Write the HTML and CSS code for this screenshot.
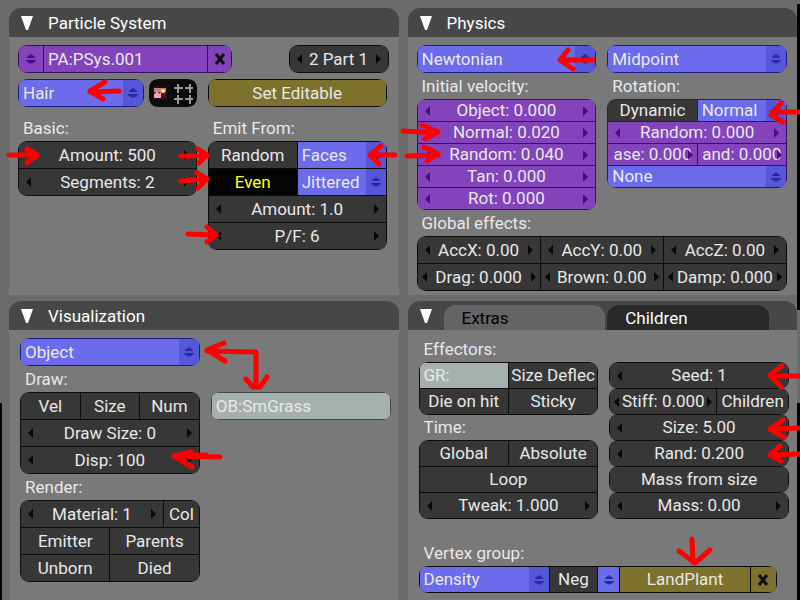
FILE: index.html
```html
<!DOCTYPE html>
<html lang="en">
    <head>
        <meta charset="utf-8" />
        <title>Particle System</title>
        <meta name="viewport" content="width=device-width, initial-scale=1.0" />
        <link rel="stylesheet" href="styles.css">
    </head>
    <body>
        <svg class="defs" aria-hidden="true">
            <symbol id="updown" viewBox="0 0 10 10"><path d="M5 0L9 3V4H1V3zM0 6H10V7L6 9.500H4L0 7z" /></symbol>
            <symbol id="cross" viewBox="0 0 12 14"><path d="M2 2L10 12M10 2L2 12" stroke="#111" stroke-width="3" fill="none" /></symbol>
            <symbol id="collapse" viewBox="0 0 12 14"><path d="M0 0H12L7 14H5z" fill="#fff" /></symbol>
        </svg>
        <div class="screen">
            <section class="panel">
                <header>
                    <button class="fold" aria-label="Collapse"><svg><use href="#collapse" /></svg></button>
                    <h2>Particle System</h2>
                </header>
                <div class="content particles">
                    <div class="bar">
                        <div class="group purple datablock">
                            <button aria-label="Browse"><svg class="updown"><use href="#updown" /></svg></button>
                            <input type="text" aria-label="Particle system name" value="PA:PSys.001">
                            <button aria-label="Delete"><svg class="cross"><use href="#cross" /></svg></button>
                        </div>
                        <div class="group part"><button class="num">2 Part 1</button></div>
                    </div>
                    <div class="columns">
                        <div>
                            <div class="bar type">
                                <div class="group blue hair">
                                    <span class="menu"><select aria-label="Type"><option>Hair</option></select><svg class="updown"><use href="#updown" /></svg></span>
                                </div>
                                <div class="group icons">
                                    <button aria-label="Material">
                                        <svg viewBox="0 0 23 26" width="23" height="26">
                                            <path d="M3 6H17V20H3z" fill="#1c1012" />
                                            <path d="M4 8H16V18H4z" fill="#6d2838" />
                                            <path d="M4 8H16V12H4z" fill="#d0787c" />
                                            <path d="M4 18V15L7 11L9 14L11 12V18z" fill="#e8a8b0" />
                                            <path d="M11 18V14L13 13L16 15V18z" fill="#441420" />
                                            <circle cx="13" cy="11" r="2" fill="#ffe868" />
                                        </svg>
                                    </button>
                                    <button aria-label="Vertices">
                                        <svg viewBox="0 0 23 26" width="23" height="26">
                                            <path d="M1 8H10M1 19H10M12 8H20M12 19H20M5 4V13M17 4V13M5 15V24M17 15V24" stroke="#989898" stroke-width="2" fill="none" />
                                        </svg>
                                    </button>
                                </div>
                            </div>
                            <p class="caption tall">Basic:</p>
                            <div class="group">
                                <button class="num">Amount: 500</button>
                                <button class="num">Segments: 2</button>
                            </div>
                        </div>
                        <div>
                            <div class="group gold"><button>Set Editable</button></div>
                            <p class="caption tall">Emit From:</p>
                            <div class="group half">
                                <button>Random</button>
                                <span class="menu blue"><select aria-label="Emit from"><option>Faces</option></select><svg class="updown"><use href="#updown" /></svg></span>
                                <button class="pressed">Even</button>
                                <span class="menu blue"><select aria-label="Distribution"><option>Jittered</option></select><svg class="updown"><use href="#updown" /></svg></span>
                                <button class="num wide">Amount: 1.0</button>
                                <button class="num wide">P/F: 6</button>
                            </div>
                        </div>
                    </div>
                </div>
            </section>

            <section class="panel">
                <header>
                    <button class="fold" aria-label="Collapse"><svg><use href="#collapse" /></svg></button>
                    <h2>Physics</h2>
                </header>
                <div class="content">
                    <div class="columns">
                        <div>
                            <div class="group blue">
                                <span class="menu"><select aria-label="Physics type"><option>Newtonian</option></select><svg class="updown"><use href="#updown" /></svg></span>
                            </div>
                            <p class="caption">Initial velocity:</p>
                            <div class="group purple short">
                                <button class="num">Object: 0.000</button>
                                <button class="num">Normal: 0.020</button>
                                <button class="num">Random: 0.040</button>
                                <button class="num">Tan: 0.000</button>
                                <button class="num">Rot: 0.000</button>
                            </div>
                        </div>
                        <div>
                            <div class="group blue">
                                <span class="menu"><select aria-label="Integrator"><option>Midpoint</option></select><svg class="updown"><use href="#updown" /></svg></span>
                            </div>
                            <p class="caption">Rotation:</p>
                            <div class="group purple short half">
                                <button class="dark">Dynamic</button>
                                <span class="menu blue"><select aria-label="Rotation"><option>Normal</option></select><svg class="updown"><use href="#updown" /></svg></span>
                                <button class="num wide">Random: 0.000</button>
                                <button class="num tight">ase: 0.000</button>
                                <button class="num tight">and: 0.000</button>
                                <span class="menu blue wide"><select aria-label="Angular velocity"><option>None</option></select><svg class="updown"><use href="#updown" /></svg></span>
                            </div>
                        </div>
                    </div>
                    <p class="caption">Global effects:</p>
                    <div class="group third">
                        <button class="num">AccX: 0.00</button>
                        <button class="num">AccY: 0.00</button>
                        <button class="num">AccZ: 0.00</button>
                        <button class="num tight">Drag: 0.000</button>
                        <button class="num tight">Brown: 0.00</button>
                        <button class="num tight">Damp: 0.000</button>
                    </div>
                </div>
            </section>

            <section class="panel lower">
                <header>
                    <button class="fold" aria-label="Collapse"><svg><use href="#collapse" /></svg></button>
                    <h2>Visualization</h2>
                </header>
                <div class="content">
                    <div class="columns">
                        <div>
                            <div class="group blue">
                                <span class="menu"><select aria-label="Visualization"><option>Object</option></select><svg class="updown"><use href="#updown" /></svg></span>
                            </div>
                            <p class="caption">Draw:</p>
                            <div class="group third">
                                <button>Vel</button>
                                <button>Size</button>
                                <button>Num</button>
                                <button class="num wide">Draw Size: 0</button>
                                <button class="num wide">Disp: 100</button>
                            </div>
                            <p class="caption">Render:</p>
                            <div class="group render">
                                <button class="num material">Material: 1</button>
                                <button class="col">Col</button>
                                <button class="side">Emitter</button>
                                <button class="side">Parents</button>
                                <button class="side">Unborn</button>
                                <button class="side">Died</button>
                            </div>
                        </div>
                        <div class="object">
                            <div class="group pale"><input type="text" aria-label="Object" value="OB:SmGrass"></div>
                        </div>
                    </div>
                </div>
            </section>

            <section class="panel lower">
                <header>
                    <button class="fold" aria-label="Collapse"><svg><use href="#collapse" /></svg></button>
                    <nav>
                        <button class="tab active">Extras</button>
                        <button class="tab">Children</button>
                    </nav>
                </header>
                <div class="content extras">
                    <div class="columns">
                        <div>
                            <p class="caption">Effectors:</p>
                            <div class="group medium half">
                                <input class="pale" type="text" aria-label="Group" value="GR:">
                                <button>Size Deflec</button>
                                <button>Die on hit</button>
                                <button>Sticky</button>
                            </div>
                            <p class="caption">Time:</p>
                            <div class="group medium half">
                                <button>Global</button>
                                <button>Absolute</button>
                                <button class="wide">Loop</button>
                                <button class="num wide">Tweak: 1.000</button>
                            </div>
                        </div>
                        <div class="stack">
                            <div class="group medium"><button class="num">Seed: 1</button></div>
                            <div class="group medium stiff">
                                <button class="num tight">Stiff: 0.000</button>
                                <button>Children</button>
                            </div>
                            <div class="group medium"><button class="num">Size: 5.00</button></div>
                            <div class="group medium"><button class="num">Rand: 0.200</button></div>
                            <div class="group medium"><button>Mass from size</button></div>
                            <div class="group medium"><button class="num">Mass: 0.00</button></div>
                        </div>
                    </div>
                    <p class="caption vertex-caption">Vertex group:</p>
                    <div class="group medium vertex">
                        <span class="menu blue"><select aria-label="Vertex group"><option>Density</option></select><svg class="updown"><use href="#updown" /></svg></span>
                        <button>Neg</button>
                        <button class="blue" aria-label="Browse groups"><svg class="updown"><use href="#updown" /></svg></button>
                        <button class="gold">LandPlant</button>
                        <button class="gold" aria-label="Clear group"><svg class="cross"><use href="#cross" /></svg></button>
                    </div>
                </div>
            </section>

            <!-- hand drawn pointers, laid over the panels -->
            <svg class="marks" viewBox="0 0 800 600" preserveAspectRatio="none" aria-hidden="true">
                <path d="M119 91L90 92M105 82L90 91L103 99" />
                <path d="M9 155L37 155M27 149L37 155L27 163" />
                <path d="M181 156L207 156M198 149L207 155L199 163" />
                <path d="M181 181L207 179M197 173L207 179L198 188" />
                <path d="M188 234L216 235M207 227L216 235L207 242" />
                <path d="M395 155L371 155M381 146L370 155L379 164" />
                <path d="M593 60L561 60M568 50L560 60L573 69" />
                <path d="M403 131L437 133M422 125L438 132L425 139" />
                <path d="M407 156L438 155M424 147L438 154L427 161" />
                <path d="M802 112L772 112M781 103L771 115L783 122" />
                <path d="M207 351L256 352V387M224 343L207 350L225 361M246 379L253 387H260L267 377" />
                <path d="M220 457L174 456M192 452L174 456L192 467M176 456L206 455" />
                <path d="M802 376L771 376M782 366L770 375L781 387" />
                <path d="M802 428L770 429M783 420L770 429L784 437" />
                <path d="M802 454L770 455M780 446L770 455L781 461" />
                <path d="M692 539L693 562M679 551L695 563L710 550" />
            </svg>
        </div>
    </body>
</html>
```

FILE: styles.css
```css
* {
    margin: 0;
    padding: 0;
    box-sizing: border-box;
}
body {
    background-color: #6b6b6b;
    color: #e8e8e8;
    font: 17px/24px Roboto, "Liberation Sans", sans-serif;
}
.defs {
    position: absolute;
    width: 0;
    height: 0;
}
.screen {
    position: relative;
    display: grid;
    grid-template-columns: 1fr 1fr;
    grid-template-rows: auto 1fr;
    column-gap: 9px;
    row-gap: 6px;
    min-height: 100vh;
    padding: 8px 3px 0 9px;
    overflow: hidden;
    background:
        linear-gradient(#000, #000) right 0 top 4px / 3px 306px no-repeat,
        linear-gradient(#000, #000) right 0 bottom 0 / 3px 197px no-repeat,
        linear-gradient(#000, #000) left 0 bottom 0 / 2px 197px no-repeat,
        #6b6b6b;
}
.panel {
    background-color: #797979;
    border-radius: 12px 12px 0 0;
}
.panel header {
    display: flex;
    align-items: center;
    height: 29px;
    padding-left: 12px;
    background-color: #474747;
    border-radius: 12px 12px 0 0;
    color: #fff;
}
h2 {
    padding-left: 15px;
    font-size: 17px;
    font-weight: normal;
}
.content {
    padding: 8px 10px 4px 9px;
}
.content.particles {
    padding-right: 12px;
}
.lower .content {
    padding: 8px 8px 4px 11px;
}
.columns {
    display: grid;
    grid-template-columns: 1fr 1fr;
    gap: 11px;
}
.bar {
    display: flex;
    justify-content: space-between;
    margin-bottom: 6px;
}
.bar.type {
    gap: 5px;
    margin-bottom: 0;
}
.caption {
    padding-left: 5px;
    line-height: 26px;
}
.caption.tall {
    padding-top: 8px;
}

/* controls */
button, input, select {
    width: 100%;
    min-width: 0;
    height: 26px;
    border: 0;
    outline: none;
    border-radius: 0;
    background-color: transparent;
    color: inherit;
    font: inherit;
    white-space: nowrap;
}
input, select {
    padding-left: 4px;
    appearance: none;
}
button svg {
    display: block;
    margin: auto;
}
.group {
    display: grid;
    gap: 1px;
    padding: 1px;
    border-radius: 9px;
    overflow: hidden;
    background-color: #0c0c0c;
}
.group > * {
    background-color: #373738;
}
.half {
    grid-template-columns: 1fr 1fr;
}
.third {
    grid-template-columns: 1fr 1fr 1fr;
}
.wide {
    grid-column: 1 / -1;
}
.short button, .short select {
    height: 21px;
    line-height: 21px;
}
.medium button, .medium input, .medium select {
    height: 25px;
    line-height: 25px;
}
.purple {
    background-color: #35106a;
}
.purple > * {
    background-color: #8343ba;
}
.group.blue {
    background-color: #1c1c88;
}
.blue > .menu, .menu.blue, button.blue {
    background-color: #6b6bec;
}
.gold > *, button.gold {
    background-color: #7e712c;
}
.pale > *, input.pale {
    background-color: #a6b1ad;
}
.group.pale {
    background-color: #3c4845;
}
button.dark {
    background-color: #373738;
}
button.pressed {
    background-color: #050505;
    color: #ffff20;
}
.menu {
    position: relative;
    display: block;
}
.menu select {
    display: block;
    background: linear-gradient(#5656d8, #5656d8) right / 20px 100% no-repeat;
}
.updown {
    width: 10px;
    height: 10px;
    fill: #2929a6;
}
.purple .updown {
    fill: #4a0a88;
}
.purple .menu .updown {
    fill: #2929a6;
}
.menu .updown {
    position: absolute;
    top: calc(50% - 5px);
    right: 5px;
    pointer-events: none;
}
.cross {
    width: 12px;
    height: 14px;
}
.num {
    position: relative;
}
.num::before, .num::after {
    content: "";
    position: absolute;
    top: calc(50% - 5px);
    border: 5px solid transparent;
}
.num::before {
    left: 7px;
    border-left-width: 0;
    border-right-color: #080808;
}
.num::after {
    right: 7px;
    border-right-width: 0;
    border-left-color: #080808;
}
.tight::before {
    left: 4px;
}
.tight::after {
    right: 4px;
}
.purple .num::before {
    border-right-color: #4a0a88;
}
.purple .num::after {
    border-left-color: #4a0a88;
}
.purple .tight::before {
    display: none;
}

/* particle system */
.datablock {
    grid-template-columns: 24px 1fr 23px;
    flex: 0 1 214px;
}
.part {
    flex: 0 1 100px;
    margin-right: -2px;
}
.hair {
    flex: 1;
}
.icons {
    grid-template-columns: 1fr 1fr;
    gap: 0;
    flex: 0 0 48px;
}
.icons > * {
    background-color: #0c0c0c;
}

/* visualization */
.render {
    grid-template-columns: repeat(10, 1fr);
}
.material {
    grid-column: span 8;
}
.col {
    grid-column: span 2;
}
.side {
    grid-column: span 5;
}
.object {
    padding-top: 54px;
}

/* extras */
.fold {
    flex: none;
    width: 12px;
    height: 14px;
}
.fold svg {
    width: 12px;
    height: 14px;
}
nav {
    display: flex;
    flex: 1;
    gap: 2px;
    align-self: flex-end;
    padding: 0 28px 0 12px;
}
.tab {
    height: 25px;
    padding-left: 18px;
    border-radius: 12px 12px 0 0;
    background-color: #282828;
    text-align: left;
}
.tab.active {
    background-color: #646464;
    color: #000;
}
.lower .extras {
    padding-top: 7px;
}
.extras .caption {
    line-height: 25px;
}
.stack {
    display: flex;
    flex-direction: column;
    padding-top: 25px;
}
.stack .group + .group {
    margin-top: -1px;
}
.stiff {
    grid-template-columns: 3fr 2fr;
}
.extras .vertex-caption {
    padding-top: 22px;
}
.vertex {
    grid-template-columns: 36fr 13fr 6fr 36fr 7fr;
    margin-right: 12px;
}

/* pointers */
.marks {
    position: absolute;
    top: 0;
    left: 0;
    width: 100%;
    height: 100%;
    pointer-events: none;
}
.marks path {
    fill: none;
    stroke: #f00;
    stroke-width: 5;
    stroke-linecap: round;
    stroke-linejoin: round;
}
```
